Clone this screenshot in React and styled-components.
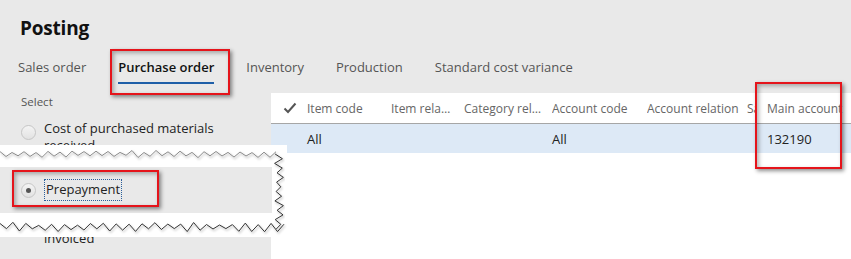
import React from "react"
import styled, { createGlobalStyle } from "styled-components"

const GlobalStyle = createGlobalStyle`
	html, body {
		margin: 0;
		padding: 0;
		background: #e9e9e9;
	}
	body {
		font-family: "Open Sans", "Noto Sans", sans-serif;
		color: #222;
	}
`

const Page = styled.div`
	position: relative;
	width: 851px;
	height: 259px;
	overflow: hidden;
	background: #e9e9e9;
	display: flex;
	flex-direction: column;
`

const Title = styled.h1`
	margin: 0;
	padding: 16px 0 0 20px;
	height: 38px;
	box-sizing: border-box;
	font-size: 19px;
	font-weight: 700;
	line-height: 24px;
	color: #111;
	letter-spacing: -0.2px;
`

const Tabs = styled.div`
	display: flex;
	gap: 32px;
	padding-left: 18px;
	height: 55px;
	box-sizing: border-box;
	padding-top: 20px;
`

const Tab = styled.div`
	font-size: 13px;
	line-height: 18px;
	height: 24px;
	color: ${(p) => (p.active ? "#111" : "#555")};
	font-weight: ${(p) => (p.active ? 600 : 400)};
	border-bottom: 2px solid ${(p) => (p.active ? "#1f5fa8" : "transparent")};
`

const Body = styled.div`
	display: flex;
	flex: 1;
`

const LeftPanel = styled.div`
	width: 271px;
	flex-shrink: 0;
	padding: 1px 0 0 21px;
	box-sizing: border-box;
	display: flex;
	flex-direction: column;
`

const SelectLabel = styled.div`
	font-size: 11.5px;
	line-height: 16px;
	color: #555;
	margin-bottom: 10px;
`

const RadioList = styled.div`
	display: flex;
	flex-direction: column;
	gap: 12.5px;
`

const RadioItem = styled.div`
	display: flex;
	align-items: flex-start;
	gap: 8px;
`

const RadioCircle = styled.span`
	width: 13px;
	height: 13px;
	margin-top: ${(p) => (p.inline ? "0" : "5px")};
	flex-shrink: 0;
	border-radius: 50%;
	border: 1px solid #c6c6c6;
	background: linear-gradient(#f4f4f4, #e2e2e2);
	display: flex;
	align-items: center;
	justify-content: center;
	&::after {
		content: "";
		width: 5px;
		height: 5px;
		border-radius: 50%;
		background: ${(p) => (p.checked ? "#555" : "transparent")};
	}
`

const RadioText = styled.span`
	font-size: 13px;
	line-height: 17px;
	width: 190px;
	color: #222;
`

const FocusText = styled.span`
	font-size: 13px;
	line-height: 17px;
	color: #222;
	padding: 1px 1px 2px 1px;
	border: 1px dotted #2a5d9a;
`

const Grid = styled.div`
	flex: 1;
	background: #fff;
	display: flex;
	flex-direction: column;
`

const GridRow = styled.div`
	display: grid;
	grid-template-columns: 36px 84px 73px 88px 95px 100px 20px 1fr;
	align-items: center;
	height: ${(p) => (p.header ? "30px" : "29px")};
	background: ${(p) => (p.selected ? "#dde9f6" : "#fff")};
	border-bottom: ${(p) => (p.header ? "1px solid #a6a6a6" : "none")};
`

const HeadCell = styled.div`
	font-size: 12px;
	color: #666;
	white-space: nowrap;
	overflow: hidden;
	text-overflow: ${(p) => (p.ellipsis ? "ellipsis" : "clip")};
	padding-right: ${(p) => (p.ellipsis ? "10px" : "0")};
	max-width: ${(p) => (p.narrow ? "9px" : "none")};
`

const Cell = styled.div`
	font-size: 13px;
	color: #222;
	white-space: nowrap;
`

const CheckCell = styled.div`
	display: flex;
	justify-content: center;
	padding-left: 2px;
`

const TornPiece = styled.div`
	position: absolute;
	left: 0;
	top: 145px;
	width: 287px;
	height: 92px;
	background: #fff;
`

const TornStrip = styled.div`
	position: absolute;
	left: 0;
	top: 22px;
	width: 272px;
	height: 46px;
	background: #e9e9e9;
	display: flex;
	align-items: center;
	padding-left: 21px;
	box-sizing: border-box;
	gap: 8px;
`

const TornEdges = styled.svg`
	position: absolute;
	left: 0;
	top: 0;
`

const Highlight = styled.div`
	position: absolute;
	left: ${(p) => p.x}px;
	top: ${(p) => p.y}px;
	width: ${(p) => p.w}px;
	height: ${(p) => p.h}px;
	box-sizing: border-box;
	border: 2.5px solid #e5141b;
	box-shadow: 2px 2px 4px rgba(0, 0, 0, 0.45), inset 2px 2px 4px rgba(0, 0, 0, 0.3);
	pointer-events: none;
`

const seeded = (seed) => {
	let s = seed
	return () => {
		s = (s * 9301 + 49297) % 233280
		return s / 233280
	}
}

const jag = (from, to, steps, axis, base, amp, seed) => {
	const rnd = seeded(seed)
	const pts = []
	for (let i = 0; i <= steps; i++) {
		const t = from + ((to - from) * i) / steps
		const off = base + (i % 2 === 0 ? -amp : amp) * (0.4 + rnd() * 0.8)
		pts.push(axis === "x" ? `${t.toFixed(1)},${off.toFixed(1)}` : `${off.toFixed(1)},${t.toFixed(1)}`)
	}
	return pts.join(" ")
}

const topEdge = jag(0, 276, 46, "x", 9, 3, 7)
const rightEdge = jag(9, 84, 16, "y", 279, 4, 13)
const bottomEdge = jag(284, 0, 44, "x", 82, 4, 29)

const Check = () => (
	<svg width="14" height="12" viewBox="0 0 14 12">
		<path d="M1.5 6.5 L5 10 L12.5 1.5" fill="none" stroke="#555" strokeWidth="2" />
	</svg>
)

const columns = [
	{ label: "Item code" },
	{ label: "Item relation", ellipsis: true },
	{ label: "Category relation", ellipsis: true },
	{ label: "Account code" },
	{ label: "Account relation" },
	{ label: "Sales tax", narrow: true },
	{ label: "Main account" },
]

const App = () => {
	return (
		<Page>
			<GlobalStyle />
			<Title>Posting</Title>
			<Tabs>
				<Tab>Sales order</Tab>
				<Tab active>Purchase order</Tab>
				<Tab>Inventory</Tab>
				<Tab>Production</Tab>
				<Tab>Standard cost variance</Tab>
			</Tabs>
			<Body>
				<LeftPanel>
					<SelectLabel>Select</SelectLabel>
					<RadioList>
						<RadioItem>
							<RadioCircle />
							<RadioText>Cost of purchased materials received</RadioText>
						</RadioItem>
						<RadioItem>
							<RadioCircle />
							<RadioText>Purchase expenditure, un-invoiced</RadioText>
						</RadioItem>
						<RadioItem>
							<RadioCircle />
							<RadioText>Cost of purchased materials invoiced</RadioText>
						</RadioItem>
					</RadioList>
				</LeftPanel>
				<Grid>
					<GridRow header>
						<CheckCell>
							<Check />
						</CheckCell>
						{columns.map((c) => (
							<HeadCell key={c.label} ellipsis={c.ellipsis} narrow={c.narrow}>
								{c.label}
							</HeadCell>
						))}
					</GridRow>
					<GridRow selected>
						<span />
						<Cell>All</Cell>
						<span />
						<span />
						<Cell>All</Cell>
						<span />
						<span />
						<Cell>132190</Cell>
					</GridRow>
				</Grid>
			</Body>

			<TornPiece>
				<TornStrip>
					<RadioCircle checked inline />
					<FocusText>Prepayment</FocusText>
				</TornStrip>
				<TornEdges width="287" height="92" viewBox="0 0 287 92">
					<defs>
						<filter id="shadow" x="-10%" y="-50%" width="120%" height="200%">
							<feDropShadow dx="1" dy="1.5" stdDeviation="1" floodColor="#000" floodOpacity="0.35" />
						</filter>
					</defs>
					<polyline points={topEdge} fill="none" stroke="#8a8a8a" strokeWidth="1" filter="url(#shadow)" />
					<polyline points={rightEdge} fill="none" stroke="#333" strokeWidth="1" filter="url(#shadow)" />
					<polyline points={bottomEdge} fill="none" stroke="#333" strokeWidth="1" filter="url(#shadow)" />
				</TornEdges>
			</TornPiece>

			<Highlight x={110} y={49} w={120} h={46} />
			<Highlight x={12} y={170} w={147} h={37} />
			<Highlight x={755} y={82} w={87} h={87} />
		</Page>
	)
}

export default App
